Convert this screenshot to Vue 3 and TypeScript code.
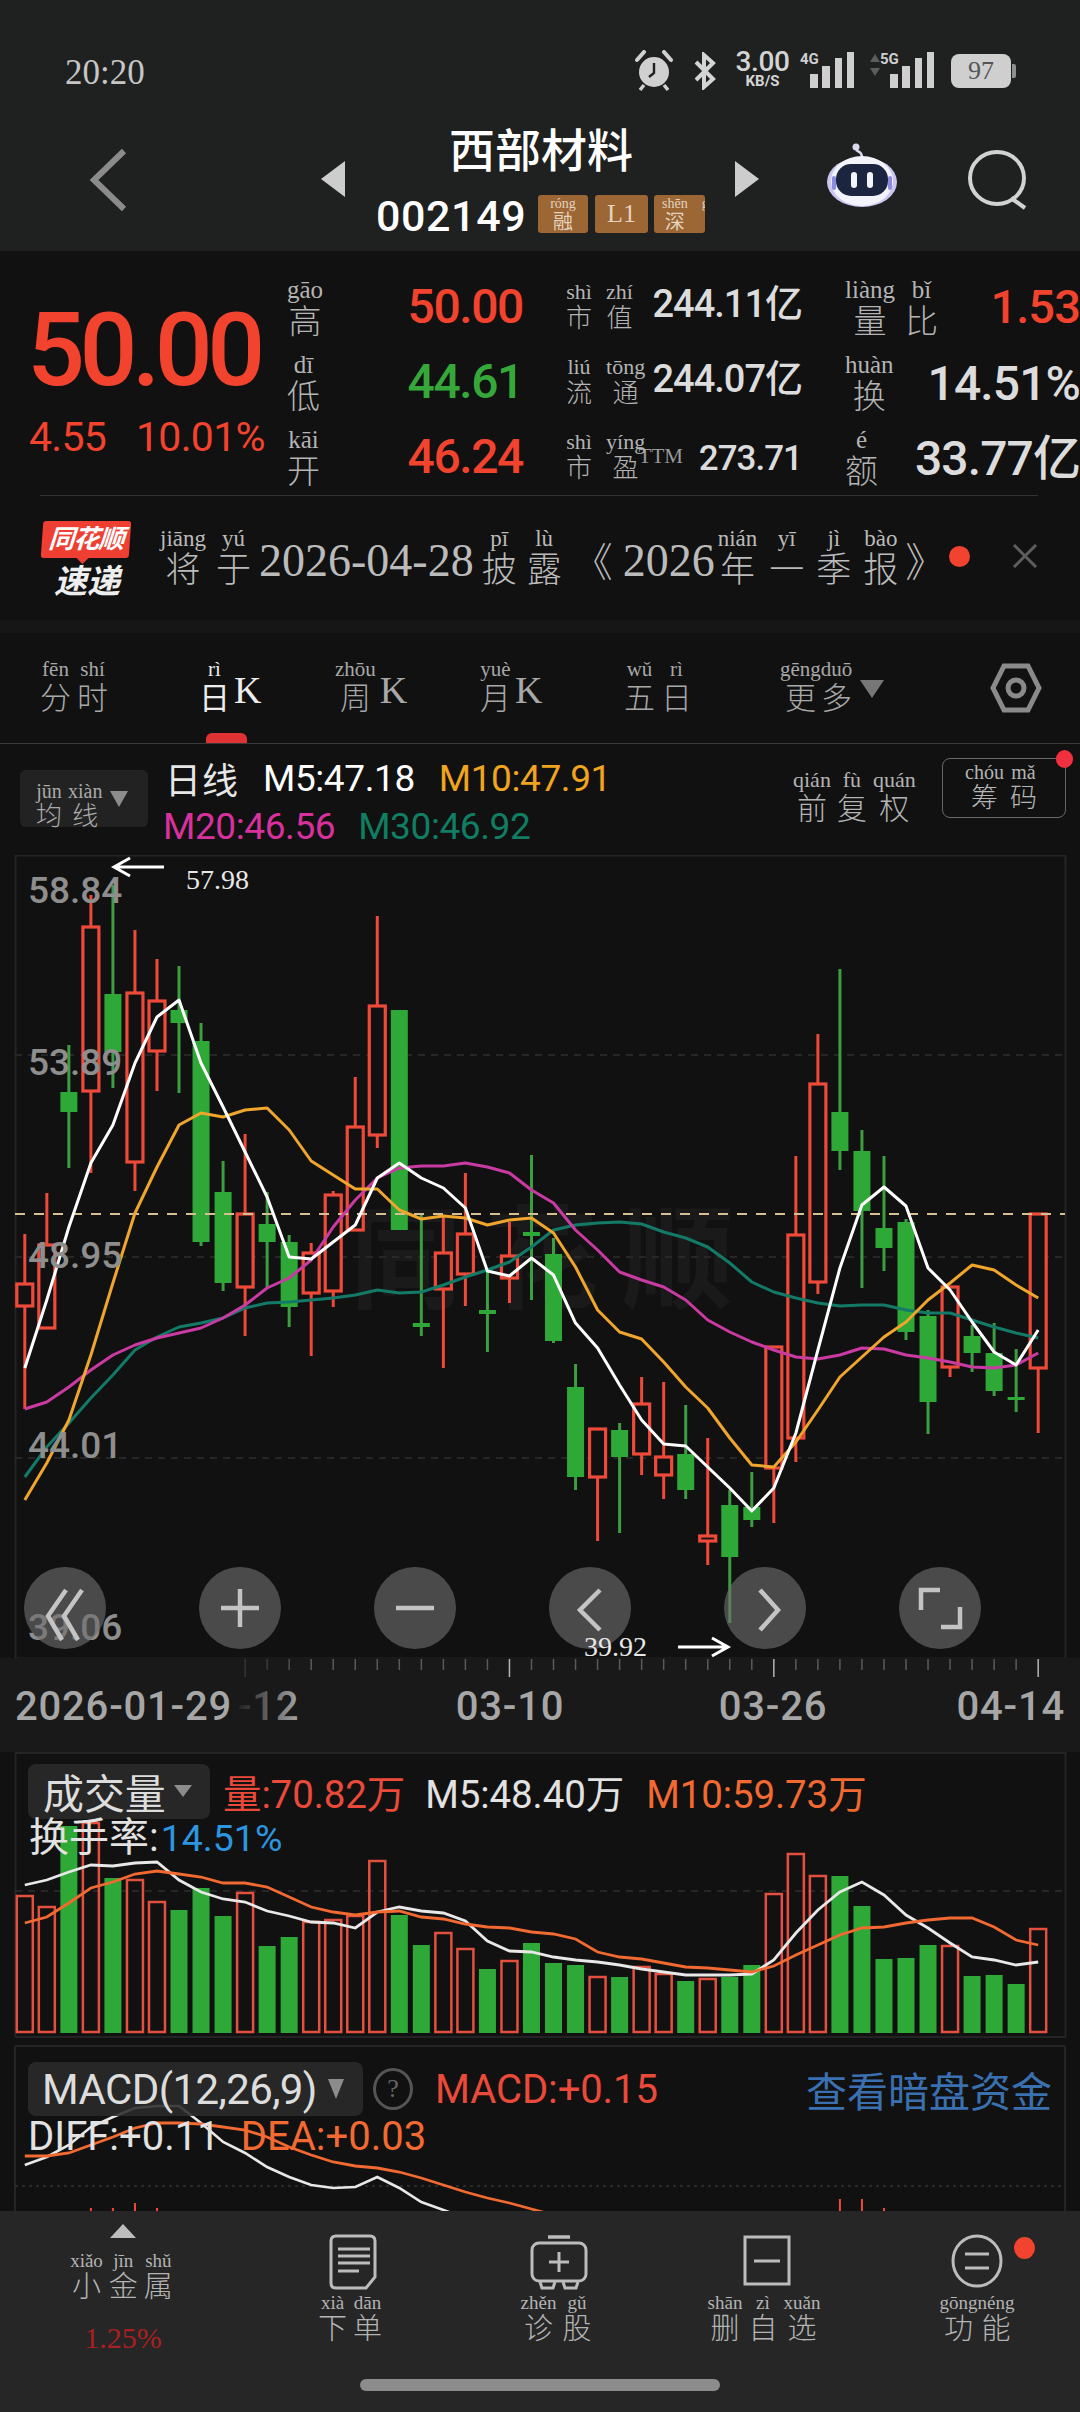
<script setup lang="ts">
import { h } from 'vue'

// Inline pinyin annotation: "市:shì 值:zhí"
const Py = (props: { t: string }) =>
  props.t.split(' ').map((pair) => {
    const [z, p] = pair.split(':')
    return h('ruby', { class: 'py' }, [z, h('rt', p)])
  })
Py.props = ['t']

const xAt = (i: number) => 24.8 + 22.03 * i
const pts = (ys: number[]) => ys.map((y, i) => `${xAt(i).toFixed(1)},${y}`).join(' ')

type C = [number, number, number, number, number]
// high, body top, body bottom, low, 1 = rising (hollow red) / 0 = falling (solid green)
const candles: C[] = [
  [1234, 1284, 1306, 1409, 1], [1193, 1245, 1328, 1328, 1], [1045, 1092, 1112, 1168, 0], [895, 927, 1091, 1173, 1],
  [885, 994, 1052, 1088, 0], [930, 993, 1162, 1191, 1], [959, 1001, 1051, 1091, 1], [966, 1010, 1023, 1093, 0],
  [1023, 1041, 1242, 1246, 0], [1161, 1192, 1283, 1291, 0], [1134, 1214, 1287, 1336, 1], [1192, 1224, 1242, 1288, 0],
  [1235, 1242, 1307, 1327, 0], [1243, 1253, 1293, 1356, 1], [1191, 1195, 1291, 1307, 1], [1077, 1127, 1230, 1230, 1],
  [916, 1006, 1135, 1148, 1], [1010, 1010, 1230, 1230, 0], [1213, 1323, 1327, 1336, 0], [1215, 1253, 1289, 1368, 1],
  [1173, 1234, 1274, 1306, 1], [1270, 1310, 1314, 1352, 0], [1222, 1256, 1278, 1303, 1], [1155, 1232, 1236, 1300, 0],
  [1238, 1254, 1341, 1343, 0], [1364, 1387, 1477, 1490, 0], [1429, 1429, 1477, 1541, 1], [1423, 1430, 1457, 1533, 0],
  [1377, 1404, 1454, 1475, 1], [1382, 1457, 1475, 1499, 1], [1405, 1454, 1490, 1499, 0], [1438, 1536, 1541, 1565, 1],
  [1490, 1505, 1557, 1623, 0], [1472, 1507, 1520, 1527, 0], [1347, 1347, 1468, 1523, 1], [1156, 1235, 1438, 1462, 1],
  [1034, 1084, 1282, 1294, 1], [969, 1112, 1151, 1170, 0], [1130, 1151, 1211, 1288, 0], [1156, 1228, 1248, 1271, 0],
  [1219, 1222, 1332, 1340, 0], [1310, 1316, 1402, 1434, 0], [1287, 1287, 1367, 1377, 1], [1325, 1336, 1353, 1372, 0],
  [1323, 1353, 1391, 1396, 0], [1349, 1397, 1400, 1412, 0], [1214, 1214, 1368, 1433, 1],
]
const ma5 = [1368, 1300, 1227, 1163, 1125, 1063, 1017, 1000, 1063, 1107, 1152, 1197, 1257, 1259, 1242, 1225, 1178, 1163, 1178, 1188, 1208, 1271, 1276, 1258, 1275, 1323, 1348, 1385, 1420, 1444, 1446, 1467, 1488, 1511, 1488, 1433, 1350, 1268, 1205, 1187, 1206, 1268, 1290, 1322, 1352, 1365, 1330]
const ma10 = [1500, 1463, 1420, 1355, 1283, 1213, 1167, 1125, 1113, 1117, 1110, 1108, 1130, 1161, 1175, 1189, 1189, 1210, 1219, 1216, 1218, 1225, 1220, 1218, 1233, 1267, 1310, 1332, 1339, 1362, 1387, 1408, 1438, 1465, 1467, 1442, 1410, 1377, 1357, 1337, 1322, 1300, 1283, 1265, 1270, 1285, 1298]
const ma20 = [1409, 1402, 1387, 1370, 1355, 1345, 1338, 1333, 1328, 1318, 1305, 1288, 1278, 1260, 1227, 1200, 1178, 1168, 1166, 1166, 1163, 1167, 1173, 1190, 1203, 1230, 1250, 1272, 1280, 1287, 1300, 1320, 1332, 1342, 1350, 1357, 1359, 1355, 1348, 1349, 1355, 1358, 1362, 1367, 1368, 1365, 1353]
const ma30 = [1477, 1447, 1423, 1398, 1375, 1350, 1337, 1327, 1323, 1318, 1308, 1303, 1302, 1300, 1298, 1295, 1290, 1293, 1292, 1285, 1277, 1270, 1262, 1247, 1230, 1225, 1223, 1222, 1224, 1232, 1238, 1247, 1263, 1282, 1292, 1298, 1303, 1306, 1305, 1305, 1310, 1313, 1313, 1320, 1327, 1333, 1338]
const maLines = [
  { ys: ma30, c: '#137a68' }, { ys: ma20, c: '#c93aa2' }, { ys: ma10, c: '#f0a52c' }, { ys: ma5, c: '#ffffff' },
]

// [top, rising]
const vols: [number, number][] = [
  [1896, 1], [1907, 1], [1826, 0], [1823, 1], [1878, 0], [1880, 1], [1902, 1], [1910, 0], [1888, 0], [1916, 0], [1893, 1], [1946, 0],
  [1937, 0], [1922, 1], [1920, 1], [1916, 1], [1861, 1], [1915, 0], [1945, 0], [1933, 1], [1949, 1], [1969, 0], [1961, 1], [1943, 0],
  [1963, 0], [1965, 0], [1977, 1], [1977, 0], [1967, 1], [1974, 1], [1981, 0], [1979, 1], [1977, 0], [1965, 0], [1894, 1], [1854, 1],
  [1876, 1], [1876, 0], [1906, 0], [1959, 0], [1958, 0], [1945, 0], [1946, 1], [1976, 0], [1975, 0], [1984, 0], [1929, 1],
]
const volM5 = [1885, 1880, 1872, 1865, 1866, 1863, 1862, 1880, 1892, 1899, 1902, 1911, 1916, 1922, 1923, 1928, 1912, 1907, 1911, 1913, 1921, 1941, 1951, 1952, 1957, 1960, 1962, 1965, 1969, 1972, 1975, 1975, 1975, 1974, 1960, 1933, 1910, 1892, 1882, 1895, 1915, 1928, 1943, 1957, 1960, 1965, 1962]
const volM10 = [1923, 1917, 1903, 1888, 1882, 1874, 1871, 1874, 1877, 1883, 1883, 1887, 1897, 1907, 1912, 1915, 1912, 1911, 1917, 1919, 1924, 1927, 1928, 1932, 1934, 1939, 1952, 1957, 1959, 1963, 1967, 1968, 1970, 1972, 1966, 1955, 1945, 1935, 1928, 1927, 1923, 1920, 1918, 1918, 1927, 1940, 1945]

const macdWhite = [2165, 2157, 2145, 2127, 2117, 2108, 2106, 2106, 2123, 2142, 2153, 2167, 2177, 2185, 2188, 2187, 2177, 2188, 2202, 2210, 2218]
const macdOrange = [2156, 2156, 2153, 2145, 2137, 2128, 2123, 2123, 2124, 2127, 2130, 2137, 2147, 2155, 2162, 2166, 2168, 2172, 2178, 2185, 2192, 2198, 2203, 2209, 2215]
const macdBars: [number, number][] = [[3, 2208], [4, 2208], [5, 2203], [6, 2208], [37, 2199], [38, 2199], [39, 2208]]

const ticks = Array.from({ length: 37 }, (_, k) => k + 10)
const controls = [65, 240, 415, 590, 765, 940]
</script>

<template>
  <div class="page">
    <header class="head">
      <div class="status">
        <span class="clock">20:20</span>
        <svg class="st-alarm" viewBox="0 0 38 42" width="38" height="42">
          <path d="M2 10 L9 2 M36 10 L29 2" stroke="#d0d0d0" stroke-width="4" stroke-linecap="round" />
          <circle cx="19" cy="22" r="15" fill="#d0d0d0" />
          <path d="M19 13v10l-5 4" stroke="#1f2020" stroke-width="2.4" fill="none" />
          <path d="M9 35l-4 5M29 35l4 5" stroke="#d0d0d0" stroke-width="3.5" />
        </svg>
        <svg class="st-bt" viewBox="0 0 24 38" width="24" height="38">
          <path d="M3 10 L20 27 L11 35 V3 L20 11 L3 28" fill="none" stroke="#d4d4d4" stroke-width="4" />
        </svg>
        <div class="st-speed"><b>3.00</b><small>KB/S</small></div>
        <div class="st-sig st-4g">
          <small>4G</small>
          <svg viewBox="0 0 46 36" width="46" height="36">
            <path d="M1 22h8v14H1zM13 14h8v22h-8zM26 6h7v30h-7zM38 0h7v36h-7z" fill="#cfcfcf" />
          </svg>
        </div>
        <svg class="st-arrows" viewBox="0 0 12 22" width="12" height="22">
          <path d="M6 0l5 8H1zM6 22l5-8H1z" fill="#5c5c5c" />
        </svg>
        <div class="st-sig st-5g">
          <small>5G</small>
          <svg viewBox="0 0 46 36" width="46" height="36">
            <path d="M1 22h8v14H1zM13 14h8v22h-8zM26 6h7v30h-7zM38 0h7v36h-7z" fill="#cfcfcf" />
          </svg>
        </div>
        <div class="st-bat"><span>97</span><i></i></div>
      </div>
      <nav class="nav">
        <svg class="back" viewBox="0 0 38 64" width="38" height="64">
          <path d="M35 3 L5 32 L35 61" fill="none" stroke="#8b8b8b" stroke-width="6" />
        </svg>
        <svg class="tri-l" viewBox="0 0 24 36" width="24" height="36"><path d="M24 0V36L0 18z" fill="#cdcdcd" /></svg>
        <div class="title">
          <div class="name">西部材料</div>
          <div class="code-row">
            <span class="code">002149</span>
            <span class="tag tag-a"><Py t="融:róng" /></span>
            <span class="tag tag-b">L1</span>
            <span class="tag tag-c"><Py t="深:shēn 港:gǎng" /></span>
          </div>
        </div>
        <svg class="tri-r" viewBox="0 0 24 36" width="24" height="36"><path d="M0 0V36L24 18z" fill="#cdcdcd" /></svg>
        <svg class="robot" viewBox="0 0 72 66" width="72" height="66">
          <path d="M36 16 C36 10 33 10 30 8" fill="none" stroke="#d8d8ee" stroke-width="2.5" />
          <circle cx="30" cy="5" r="3.5" fill="#d8d8ee" />
          <ellipse cx="36" cy="40" rx="35" ry="25" fill="#c9c7f2" />
          <ellipse cx="36" cy="39" rx="31" ry="25" fill="#f3f3fb" />
          <rect x="10" y="22" width="52" height="32" rx="15" fill="#1c2540" />
          <rect x="25" y="30" width="6" height="16" rx="3" fill="#f4f4ff" />
          <rect x="41" y="30" width="6" height="16" rx="3" fill="#f4f4ff" />
          <rect x="6" y="34" width="4" height="14" rx="2" fill="#8d8be0" />
          <rect x="62" y="34" width="4" height="14" rx="2" fill="#8d8be0" />
        </svg>
        <svg class="search" viewBox="0 0 62 60" width="62" height="60">
          <ellipse cx="30" cy="28" rx="27" ry="26" fill="none" stroke="#d2d2d2" stroke-width="4" />
          <path d="M44 48 L58 58" stroke="#d2d2d2" stroke-width="4" />
        </svg>
      </nav>
    </header>

    <section class="quote">
      <div class="price">
        <div class="big">50.00</div>
        <div class="chg"><span>4.55</span><span>10.01%</span></div>
      </div>
      <div class="stat s1">
        <div class="row"><span class="lab"><Py t="高:gāo" /></span><span class="val up">50.00</span></div>
        <div class="row"><span class="lab"><Py t="低:dī" /></span><span class="val down">44.61</span></div>
        <div class="row"><span class="lab"><Py t="开:kāi" /></span><span class="val up">46.24</span></div>
      </div>
      <div class="stat s2">
        <div class="row"><span class="lab"><Py t="市:shì 值:zhí" /></span><span class="val">244.11亿</span></div>
        <div class="row"><span class="lab"><Py t="流:liú 通:tōng" /></span><span class="val">244.07亿</span></div>
        <div class="row"><span class="lab"><Py t="市:shì 盈:yíng" /><sup>TTM</sup></span><span class="val small">273.71</span></div>
      </div>
      <div class="stat s3">
        <div class="row"><span class="lab"><Py t="量:liàng 比:bǐ" /></span><span class="val up">1.53</span></div>
        <div class="row"><span class="lab"><Py t="换:huàn" /></span><span class="val">14.51%</span></div>
        <div class="row"><span class="lab"><Py t="额:é" /></span><span class="val big2">33.77亿</span></div>
      </div>
    </section>

    <section class="ticker">
      <div class="logo">
        <div class="flag">同花顺</div>
        <div class="sudi">速递</div>
      </div>
      <div class="msg">
        <Py t="将:jiāng 于:yú" /><span class="num">2026-04-28</span><Py t="披:pī 露:lù" /><span class="br">《</span><span class="num n2">2026</span><div class="yr"><Py t="年:nián 一:yī 季:jì 报:bào" /></div><span class="br b2">》</span>
      </div>
      <i class="dot"></i>
      <svg class="close" viewBox="0 0 26 24" width="26" height="24">
        <path d="M2 1 L24 23 M24 1 L2 23" stroke="#5e5e5e" stroke-width="3" />
      </svg>
    </section>
    <div class="band"></div>

    <section class="tabs">
      <div class="tab t1"><Py t="分:fēn 时:shí" /></div>
      <div class="tab t2 on"><Py t="日:rì" /><span class="k">K</span><i></i></div>
      <div class="tab t3"><Py t="周:zhōu" /><span class="k">K</span></div>
      <div class="tab t4"><Py t="月:yuè" /><span class="k">K</span></div>
      <div class="tab t5"><Py t="五:wǔ 日:rì" /></div>
      <div class="tab t6"><Py t="更:gēng 多:duō" /><svg viewBox="0 0 24 18" width="24" height="18"><path d="M0 0H24L12 18z" fill="#777" /></svg></div>
      <svg class="gear" viewBox="0 0 52 50" width="52" height="50">
        <path d="M14 3 H38 L49 25 L38 47 H14 L3 25z" fill="none" stroke="#8a8a8a" stroke-width="5" />
        <circle cx="26" cy="25" r="8" fill="none" stroke="#8a8a8a" stroke-width="5" />
      </svg>
    </section>

    <section class="legend">
      <div class="sel">
        <span class="sel-t"><Py t="均:jūn 线:xiàn" /></span>
        <svg viewBox="0 0 18 16" width="18" height="16"><path d="M0 0H18L9 16z" fill="#8c8c8c" /></svg>
      </div>
      <div class="ma">
        <div class="ma-l"><span class="ri">日线</span><span class="m5">M5:47.18</span><span class="m10">M10:47.91</span></div>
        <div class="ma-l"><span class="m20">M20:46.56</span><span class="m30">M30:46.92</span></div>
      </div>
      <div class="fq"><Py t="前:qián 复:fù 权:quán" /></div>
      <div class="chip"><Py t="筹:chóu 码:mǎ" /><i></i></div>
    </section>

    <svg class="chart main" viewBox="0 855 1080 803" width="1080" height="803">
      <rect x="15.5" y="855.5" width="1050" height="803" fill="none" stroke="#242424" stroke-width="2" />
      <text x="350" y="1300" class="wm">同花顺</text>
      <path d="M15 1055H1065M15 1257H1065M15 1458H1065" stroke="#2e2e2e" stroke-width="1.5" stroke-dasharray="7 6" />
      <g v-for="(c, i) in candles" :key="i">
        <line :x1="xAt(i)" :x2="xAt(i)" :y1="c[0]" :y2="c[1]" :stroke="c[4] ? '#ee4a3a' : '#3c9e40'" stroke-width="3" />
        <line :x1="xAt(i)" :x2="xAt(i)" :y1="c[2]" :y2="c[3]" :stroke="c[4] ? '#ee4a3a' : '#3c9e40'" stroke-width="3" />
        <rect v-if="c[4]" :x="xAt(i) - 8" :y="c[1]" width="16" :height="c[2] - c[1]" fill="#111" stroke="#ee4a3a" stroke-width="3.2" />
        <rect v-else :x="xAt(i) - 8.5" :y="c[1]" width="17" :height="c[2] - c[1]" fill="#2ea836" />
      </g>
      <path d="M15 1214H1065" stroke="#d6bf90" stroke-width="2" stroke-dasharray="10 9" />
      <polyline v-for="l in maLines" :key="l.c" :points="pts(l.ys)" fill="none" :stroke="l.c" stroke-width="3" stroke-linejoin="round" />
      <text x="28" y="903" class="axis">58.84</text>
      <text x="28" y="1075" class="axis">53.89</text>
      <text x="28" y="1268" class="axis">48.95</text>
      <text x="28" y="1458" class="axis">44.01</text>
      <text x="28" y="1640" class="axis">39.06</text>
      <g v-for="x in controls" :key="x">
        <circle :cx="x" cy="1608" r="41" fill="#6e6e6e" fill-opacity="0.62" />
      </g>
      <g fill="none" stroke="#c4c4c4" stroke-width="4.5">
        <path d="M66 1590 L48 1616 L62 1640 M82 1590 L64 1616 L78 1640" />
        <path d="M240 1589V1627M221 1608H259" />
        <path d="M396 1608H434" />
        <path d="M600 1590 L580 1610 L600 1630" />
        <path d="M760 1590 L778 1610 L760 1630" />
        <path d="M921 1610V1590H940M960 1607V1627H941" />
      </g>
      <path d="M164 867H116M130 858L114 867L130 876" fill="none" stroke="#fff" stroke-width="3" />
      <text x="186" y="889" class="mark">57.98</text>
      <text x="584" y="1656" class="mark">39.92</text>
      <path d="M678 1647H726M712 1638L728 1647L712 1656" fill="none" stroke="#fff" stroke-width="3" />
    </svg>

    <svg class="chart time" viewBox="0 1658 1080 94" width="1080" height="94">
      <defs>
        <linearGradient id="fade" x1="0" x2="1" y1="0" y2="0">
          <stop offset="0" stop-color="#191919" />
          <stop offset="0.78" stop-color="#191919" />
          <stop offset="1" stop-color="#191919" stop-opacity="0" />
        </linearGradient>
      </defs>
      <line v-for="k in ticks" :key="k" :x1="xAt(k)" :x2="xAt(k)" y1="1659" :y2="(k - 10) % 12 === 0 ? 1677 : 1670"
        :stroke="(k - 10) % 12 === 0 ? '#b5b5b5' : '#5a5a5a'" stroke-width="1.5" />
      <text x="245" y="1720" class="date" text-anchor="middle">02-12</text>
      <rect x="0" y="1658" width="300" height="94" fill="url(#fade)" />
      <text x="15" y="1720" class="date">2026-01-29</text>
      <text x="510" y="1720" class="date" text-anchor="middle">03-10</text>
      <text x="773" y="1720" class="date" text-anchor="middle">03-26</text>
      <text x="1065" y="1720" class="date" text-anchor="end">04-14</text>
    </svg>

    <section class="panel vol">
      <svg class="chart" viewBox="0 1752 1080 293" width="1080" height="293">
        <rect x="15.5" y="1753" width="1050" height="284" fill="none" stroke="#242424" stroke-width="2" />
        <path d="M15 1891H1065" stroke="#2e2e2e" stroke-width="1.5" stroke-dasharray="7 6" />
        <template v-for="(v, i) in vols" :key="i">
          <rect v-if="v[1]" :x="xAt(i) - 8" :y="v[0]" width="16" :height="2032 - v[0]" fill="none" stroke="#e4503f" stroke-width="2.5" />
          <rect v-else :x="xAt(i) - 8.5" :y="v[0]" width="17" :height="2033 - v[0]" fill="#2ea836" />
        </template>
        <polyline :points="pts(volM5)" fill="none" stroke="#e8e8e8" stroke-width="2.8" />
        <polyline :points="pts(volM10)" fill="none" stroke="#f26a31" stroke-width="2.8" />
      </svg>
      <div class="vol-legend">
        <div class="vl1">
          <div class="pick"><span>成交量</span><svg viewBox="0 0 18 12" width="18" height="12"><path d="M0 0H18L9 12z" fill="#8c8c8c" /></svg></div>
          <span class="c-red">量:70.82万</span><span class="c-wht">M5:48.40万</span><span class="c-org">M10:59.73万</span>
        </div>
        <div class="vl2"><span class="c-wht">换手率:</span><span class="c-blue">14.51%</span></div>
      </div>
    </section>

    <section class="panel macd">
      <svg class="chart" viewBox="0 2045 1080 166" width="1080" height="166">
        <path d="M15 2046H1065M15 2046V2211M1065 2046V2211" fill="none" stroke="#242424" stroke-width="2" />
        <path d="M15 2186H1065" stroke="#333" stroke-width="1.5" stroke-dasharray="3 4" />
        <line v-for="b in macdBars" :key="b[0]" :x1="xAt(b[0])" :x2="xAt(b[0])" :y1="b[1]" y2="2212" stroke="#ee4a3a" stroke-width="2" />
        <polyline :points="pts(macdWhite)" fill="none" stroke="#e8e8e8" stroke-width="2.6" />
        <polyline :points="pts(macdOrange)" fill="none" stroke="#f26a31" stroke-width="2.8" />
      </svg>
      <div class="macd-legend">
        <div class="ml1">
          <div class="pick"><span>MACD(12,26,9)</span><svg viewBox="0 0 16 20" width="16" height="20"><path d="M0 0H16L8 20z" fill="#8c8c8c" /></svg></div>
          <span class="help">?</span>
          <span class="c-red">MACD:+0.15</span>
          <span class="see">查看暗盘资金</span>
        </div>
        <div class="ml2"><span class="c-wht">DIFF:+0.11</span><span class="c-org">DEA:+0.03</span></div>
      </div>
    </section>

    <footer class="bottom">
      <div class="cols">
        <div class="col c1">
          <svg viewBox="0 0 26 14" width="26" height="14"><path d="M13 0L26 14H0z" fill="#bdbdbd" /></svg>
          <div class="bl"><Py t="小:xiǎo 金:jīn 属:shǔ" /></div>
          <div class="pct">1.25%</div>
        </div>
        <div class="col">
          <svg class="ic" viewBox="0 0 50 56" width="50" height="56">
            <path d="M8 2H42Q47 2 47 7V43L38 54H8Q3 54 3 49V7Q3 2 8 2z" fill="none" stroke="#bcbcbc" stroke-width="3" />
            <path d="M10 15H42M10 22H42M10 29H42M10 37H31" stroke="#bcbcbc" stroke-width="3" />
          </svg>
          <div class="bl"><Py t="下:xià 单:dān" /></div>
        </div>
        <div class="col">
          <svg class="ic" viewBox="0 0 60 56" width="60" height="56">
            <path d="M19 3H41" stroke="#bcbcbc" stroke-width="3.5" />
            <rect x="3" y="9" width="54" height="38" rx="7" fill="none" stroke="#bcbcbc" stroke-width="3" />
            <path d="M30 18V38M20 28H40" stroke="#bcbcbc" stroke-width="3" />
            <path d="M11 48L13 54H24L26 48M34 48L36 54H47L49 48" fill="none" stroke="#bcbcbc" stroke-width="3" />
          </svg>
          <div class="bl"><Py t="诊:zhěn 股:gǔ" /></div>
        </div>
        <div class="col">
          <svg class="ic" viewBox="0 0 50 56" width="50" height="56">
            <rect x="3" y="3" width="44" height="47" fill="none" stroke="#bcbcbc" stroke-width="3" />
            <path d="M12 27H38" stroke="#bcbcbc" stroke-width="3" />
          </svg>
          <div class="bl"><Py t="删:shān 自:zì 选:xuǎn" /></div>
        </div>
        <div class="col c5">
          <svg class="ic" viewBox="0 0 54 56" width="54" height="56">
            <ellipse cx="27" cy="27" rx="24" ry="25" fill="none" stroke="#bcbcbc" stroke-width="3" />
            <path d="M15 20H39M15 34H39" stroke="#bcbcbc" stroke-width="3" />
          </svg>
          <i class="red-dot"></i>
          <div class="bl"><Py t="功:gōng 能:néng" /></div>
        </div>
      </div>
      <div class="home"></div>
    </footer>
  </div>
</template>

<style>
html, body { margin: 0; background: #111; }
ruby.py { margin-right: var(--g, 6px); ruby-align: center; }
ruby.py rt { font-family: "Liberation Serif", serif; font-size: var(--rt, 22px); line-height: 1; font-weight: 400; }
</style>

<style scoped>
.page {
  width: 1080px; height: 2412px; overflow: hidden; background: #111;
  font-family: Roboto, "Noto Sans CJK SC", sans-serif; color: #ddd;
  display: flex; flex-direction: column;
}
.chart { display: block; }
.up { color: #f2432e; }
.down { color: #36a83a; }

/* header */
.head { height: 251px; background: #1f2020; flex: none; }
.status { height: 120px; display: flex; align-items: flex-start; padding-top: 50px; box-sizing: border-box; }
.clock { font: 35px/34px "Liberation Serif", serif; color: #c6c6c6; margin: 6px 0 0 65px; width: 570px; }
.st-bt { margin: 2px 0 0 20px; }
.st-speed { margin-left: 17px; width: 57px; display: flex; flex-direction: column; align-items: center; color: #d4d4d4; }
.st-speed b { font-size: 28px; line-height: 24px; font-weight: 500; letter-spacing: -.4px; }
.st-speed small { font-size: 15px; line-height: 15px; font-weight: 700; }
.st-sig { position: relative; width: 46px; height: 36px; margin-top: 2px; }
.st-sig small { position: absolute; top: -1px; left: -9px; font-size: 15px; line-height: 16px; font-weight: 700; color: #cfcfcf; }
.st-sig svg { display: block; }
.st-4g { margin-left: 18px; }
.st-arrows { margin: 4px 0 0 14px; }
.st-5g { margin-left: 8px; }
.st-bat { margin: 4px 0 0 16px; width: 60px; height: 34px; background: #cfcfcf; border-radius: 8px; position: relative; text-align: center; color: #555; font: 26px/34px "Liberation Serif", serif; }
.st-bat i { position: absolute; right: -5px; top: 10px; width: 4px; height: 14px; background: #8e8e8e; border-radius: 0 2px 2px 0; }

.nav { height: 131px; display: flex; align-items: flex-start; }
.back { margin: 28px 0 0 89px; }
.tri-l { margin: 41px 0 0 194px; }
.title { width: 330px; margin: 0 29px 0 31px; display: flex; flex-direction: column; align-items: center; }
.name { font-size: 46px; line-height: 60px; color: #fff; font-weight: 500; letter-spacing: 0; margin-top: 1px; }
.code-row { display: flex; align-items: flex-start; margin-top: 14px; width: 330px; }
.code { font-size: 43px; line-height: 42px; color: #fff; font-weight: 500; letter-spacing: .6px; width: 162px; }
.tag { height: 38px; background: #9c6635; border-radius: 3px; color: #e3d3bf; font-size: 20px; text-align: center; overflow: hidden; line-height: 54px; --rt: 14px; --g: 0px; white-space: nowrap; }
.tag-a { width: 50px; }
.tag-b { width: 53px; margin-left: 7px; font: 26px/38px "Liberation Serif", serif; }
.tag-c { width: 51px; margin-left: 6px; --g: 14px; text-align: left; padding-left: 8px; box-sizing: border-box; }
.tri-r { margin-top: 41px; }
.robot { margin: 22px 0 0 67px; }
.search { margin: 30px 0 0 69px; }

/* quote */
.quote { height: 249px; flex: none; box-sizing: border-box; padding-top: 19px; display: flex; position: relative; }
.quote::after { content: ""; position: absolute; left: 40px; right: 42px; bottom: 4px; height: 1.5px; background: #333; }
.price { width: 287px; padding-left: 29px; box-sizing: border-box; }
.big { font-size: 102px; line-height: 110px; font-weight: 500; color: #f2432e; margin: 25px 0 0 -2px; letter-spacing: -5.5px; }
.chg { display: flex; color: #f2432e; font-size: 41px; line-height: 46px; margin-top: 9px; letter-spacing: -.7px; }
.chg span:first-child { width: 107px; }
.stat { display: flex; flex-direction: column; }
.s1 { width: 236px; }
.s2 { width: 236px; margin-left: 43px; }
.s3 { width: 235px; margin-left: 43px; }
.row { height: 75px; display: flex; justify-content: space-between; align-items: flex-end; padding-bottom: 9px; box-sizing: border-box; white-space: nowrap; }
.lab { font-size: 33px; line-height: 32px; color: #b4b4b4; font-weight: 300; --g: 0px; --rt: 25px; margin-bottom: -2px; }
.s2 .lab { font-size: 26px; line-height: 28px; --g: 14px; --rt: 22px; margin-bottom: 4px; }
.s2 .lab :deep(ruby:last-of-type) { margin-right: 0; }
.s2 .lab sup { font: 21px "Liberation Serif", serif; color: #9a9a9a; vertical-align: 14px; line-height: 0; }
.s3 .lab { --g: 10px; }
.val { font-size: 48px; line-height: 50px; font-weight: 500; color: #dcdcdc; letter-spacing: -1.4px; margin-bottom: 4px; }
.val.up { color: #f2432e; }
.val.down { color: #36a83a; }
.s2 .val { font-size: 38px; letter-spacing: -1px; margin-bottom: 7px; }
.s2 .val.small { font-size: 35px; margin-bottom: 2px; }
.s3 .val { font-size: 48px; letter-spacing: -.9px; margin-bottom: 2px; }
.s3 .val.up { font-size: 47px; margin-bottom: 4px; }
.big2 { letter-spacing: -.6px; }

/* ticker */
.ticker { height: 120px; flex: none; display: flex; align-items: flex-start; color: #bbb; position: relative; }
.logo { width: 90px; margin: 21px 0 0 42px; }
.flag { width: 88px; height: 37px; background: #ef3f33; border-radius: 3px; color: #fff; font-size: 26px; line-height: 37px; font-style: italic; font-weight: 700; text-align: center; transform: skewX(-4deg); position: relative; letter-spacing: -1px; }
.flag::after { content: ""; position: absolute; left: 36px; top: 37px; border: 6px solid transparent; border-top-color: #ef3f33; }
.sudi { color: #eee; font-size: 33px; line-height: 36px; font-style: italic; font-weight: 700; text-align: center; margin-top: 6px; }
.msg { margin: 14px 0 0 28px; width: 789px; font-size: 35px; line-height: 38px; font-weight: 300; white-space: nowrap; --g: 10px; --rt: 23px; display: flex; align-items: flex-end; height: 76px; }
.num { font: 46px/44px "Liberation Serif", serif; margin: 0 8px 7px -2px; }
.n2 { margin: 0 3px 7px 10px; }
.yr { display: flex; align-items: flex-end; --g: 12px; }
.br { font-size: 40px; line-height: 44px; margin: 0 0 4px 1px; }
.b2 { margin-left: -5px; }
.dot { width: 21px; height: 21px; background: #f2432e; border-radius: 50%; margin: 46px 0 0 0; }
.close { margin: 44px 0 0 42px; }
.band { height: 13px; background: #161616; flex: none; }

/* tabs */
.tabs { height: 111px; flex: none; box-sizing: border-box; border-bottom: 1.5px solid #3a3a3a; display: flex; align-items: flex-start; color: #a8a8a8; position: relative; }
.tab { position: relative; font-size: 31px; line-height: 30px; font-weight: 300; --rt: 21px; --g: 6px; padding-top: 30px; display: flex; align-items: flex-end; height: 81px; box-sizing: border-box; white-space: nowrap; }
.k { font: 38px/36px "Liberation Serif", serif; margin: 0 0 6px -2px; }
.t1 { margin-left: 40px; width: 159px; }
.t2 { width: 136px; color: #ededed; font-weight: 400; }
.t2 i { position: absolute; left: 7px; top: 100px; width: 41px; height: 10px; background: #e03232; border-radius: 6px 6px 0 0; }
.t3 { width: 145px; }
.t4 { width: 144px; }
.t5 { width: 156px; }
.t6 { --g: 0px; width: 210px; }
.t6 svg { margin: 0 0 16px 8px; }
.gear { margin-top: 30px; }

/* legend */
.legend { height: 111px; flex: none; display: flex; align-items: flex-start; position: relative; }
.sel { width: 128px; height: 57px; margin: 26px 0 0 20px; background: #222; border-radius: 6px; display: flex; align-items: center; box-sizing: border-box; padding-left: 16px; }
.sel-t { font-size: 26px; line-height: 26px; color: #aaa; font-weight: 300; --rt: 20px; --g: 6px; white-space: nowrap; margin-top: 14px; }
.sel svg { margin-left: 2px; }
.ma { width: 611px; margin: 10px 0 0 15px; }
.ma-l { display: flex; align-items: center; height: 48px; font-size: 37px; letter-spacing: -.4px; }
.ri { font-size: 36px; color: #e6e6e6; letter-spacing: 1px; margin: 0 24px 0 2px; font-weight: 400; }
.m5 { color: #fff; margin-right: 24px; }
.m10 { color: #f0a41f; }
.m20 { color: #d8319e; }
.m30 { color: #0f7e62; margin-left: 23px; }
.fq { margin: 26px 0 0 19px; width: 149px; font-size: 30px; line-height: 28px; --rt: 22px; --g: 6px; color: #b4b4b4; white-space: nowrap; font-weight: 300; }
.chip { position: relative; box-sizing: border-box; width: 124px; height: 60px; margin-top: 14px; border: 1.5px solid #666; border-radius: 8px; color: #b4b4b4; font-size: 27px; line-height: 28px; --rt: 20px; --g: 6px; text-align: center; white-space: nowrap; padding-top: 25px; font-weight: 300; }
.chip i { position: absolute; right: -8px; top: -9px; width: 17px; height: 18px; background: #f1303f; border-radius: 50%; }

/* panels */
.panel { position: relative; flex: none; }
.vol { height: 293px; }
.macd { height: 166px; overflow: hidden; }
.vol-legend, .macd-legend { position: absolute; left: 28px; right: 0; top: 0; }
.pick { background: rgba(42, 42, 42, .88); border-radius: 8px; display: flex; align-items: center; box-sizing: border-box; color: #ddd; }
.vl1 { display: flex; align-items: center; margin-top: 11px; font-size: 38.5px; letter-spacing: -.1px; }
.vl1 .pick { width: 182px; height: 55px; font-size: 41px; padding-left: 15px; margin-right: 13px; }
.vl1 .pick svg { margin-left: 8px; }
.c-red { color: #ea4a3a; }
.c-wht { color: #e2e2e2; }
.c-org { color: #f26a31; }
.c-blue { color: #2d96e0; }
.vl1 .c-wht { margin: 0 22px 0 20px; }
.vl2 { font-size: 40px; line-height: 42px; margin-top: -2px; margin-left: 1px; }
.vl2 .c-blue { font-size: 37.5px; margin-left: 2px; }
.macd-legend { top: 14px; }
.ml1 { display: flex; align-items: center; }
.ml1 .pick { width: 335px; height: 54px; font-size: 42px; padding-left: 14px; letter-spacing: -.6px; white-space: nowrap; }
.ml1 .pick svg { margin-left: 11px; }
.help { width: 40px; height: 42px; box-sizing: border-box; border: 3px solid #555; border-radius: 50%; color: #666; text-align: center; font: 26px/36px "Liberation Serif", serif; margin-left: 10px; }
.ml1 .c-red { font-size: 40px; margin-left: 22px; width: 371px; letter-spacing: -.1px; }
.see { color: #3a70b0; font-size: 41px; white-space: nowrap; letter-spacing: 0; }
.ml2 { display: flex; font-size: 40px; line-height: 40px; margin-top: -2px; letter-spacing: 0; }
.ml2 .c-wht { margin-right: 21px; }

/* svg text */
.axis { font: 500 37px Roboto, sans-serif; fill: #8e8e8e; }
.mark { font: 28px "Liberation Serif", serif; fill: #e8e8e8; }
.date { font: 500 40px Roboto, sans-serif; fill: #a6a6a6; letter-spacing: .8px; }
.wm { font: 700 112px "Noto Sans CJK SC", sans-serif; fill: #1a1a1a; letter-spacing: 24px; }
.time { flex: none; background: #191919; }

/* bottom */
.bottom { height: 201px; flex: none; background: #262626; position: relative; z-index: 1; display: flex; flex-direction: column; }
.cols { display: grid; grid-template-columns: 246px 214px 198px 218px 202px; height: 168px; }
.col { display: flex; flex-direction: column; align-items: center; position: relative; color: #b4b4b4; padding-top: 23px; box-sizing: border-box; }
.c1 { padding-top: 13px; }
.ic { flex: none; }
.bl { font-size: 29px; line-height: 26px; font-weight: 300; --rt: 19px; --g: 6px; white-space: nowrap; margin-top: 4px; }
.c1 .bl { margin-top: 14px; margin-left: 3px; }
.c5 .bl { --g: 0px; }
.pct { font: 30px/34px "Liberation Serif", serif; color: #a92020; margin-top: 21px; }
.red-dot { position: absolute; left: 138px; top: 26px; width: 21px; height: 22px; background: #f2432e; border-radius: 50%; }
.home { width: 360px; height: 12px; background: #8c8c8c; border-radius: 6px; margin: 0 auto; }
</style>
